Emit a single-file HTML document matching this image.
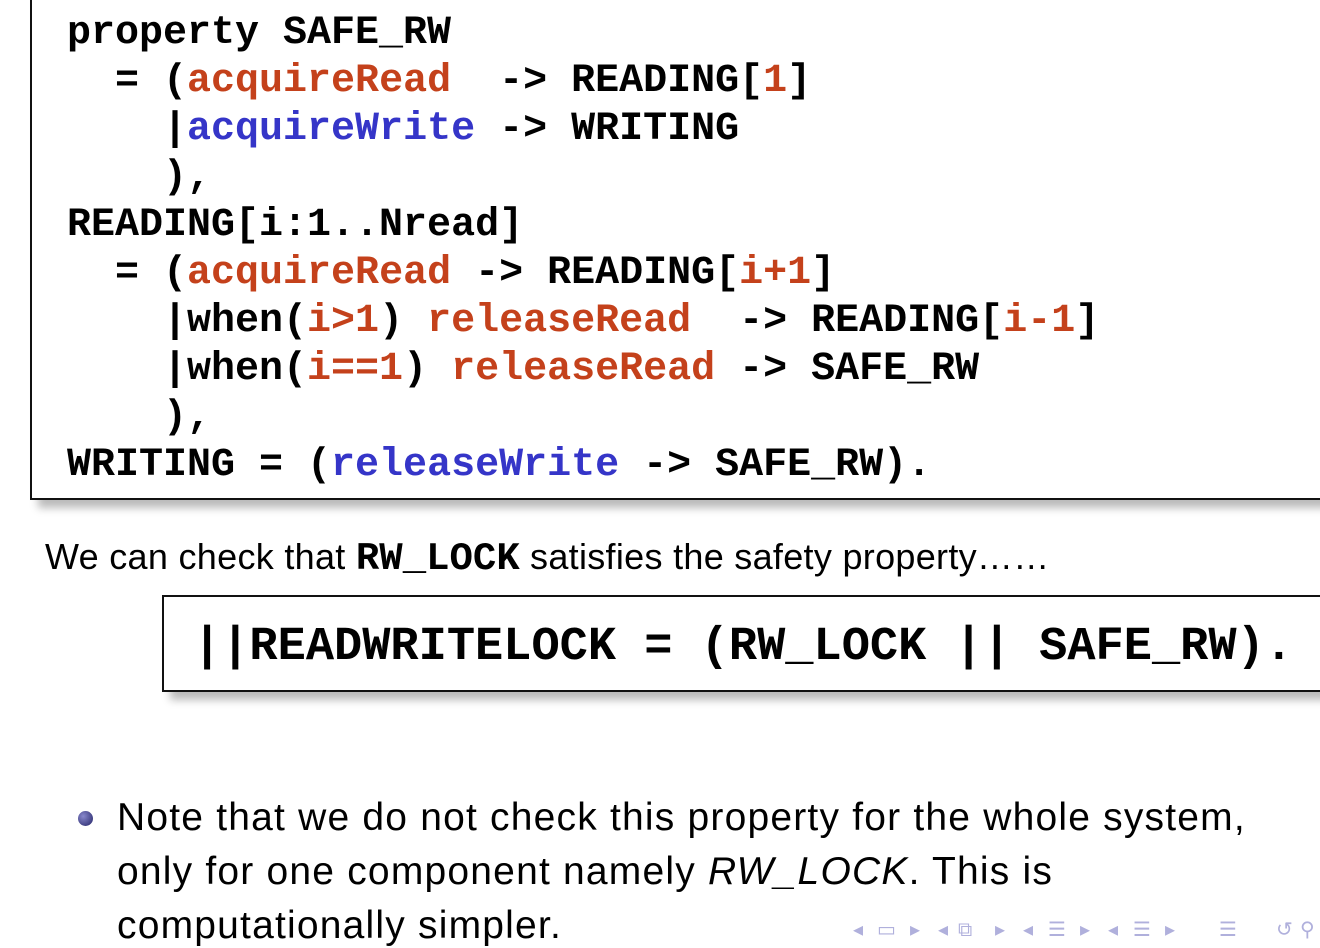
<!DOCTYPE html>
<html><head><meta charset="utf-8"><style>
html,body{margin:0;padding:0;background:#fff;width:1320px;height:948px;overflow:hidden;position:relative}
.mono{font-family:"Liberation Mono",monospace;font-weight:bold;color:#000}
.r{color:#c4411b}.b{color:#3535c8}
#box1{position:absolute;left:30px;top:-10px;width:1310px;height:506px;border:2px solid #111;box-shadow:8px 8px 8px #bbb;background:#fff}
#code{position:absolute;left:67px;top:10px;margin:0;font-size:40px;line-height:48px;white-space:pre}
#t1{position:absolute;left:45px;top:536px;font-family:"Liberation Sans",sans-serif;font-size:36px;letter-spacing:0.3px;white-space:nowrap}
#box2{position:absolute;left:162px;top:595px;width:1180px;height:93px;border:2px solid #111;box-shadow:8px 8px 8px #bbb;background:#fff}
#t2{position:absolute;left:193px;top:621px;font-size:47px;line-height:54px;white-space:pre}
#bul{position:absolute;left:78px;top:811px;width:15px;height:15px;border-radius:50%;background:radial-gradient(circle at 35% 35%,#8888cc,#222266)}
#t3{position:absolute;left:117px;top:791px;font-family:"Liberation Sans",sans-serif;font-size:39px;line-height:54px;letter-spacing:1.2px;white-space:nowrap}
.n{position:absolute;top:917px;font-family:"DejaVu Sans",sans-serif;font-size:20px;color:#b0b0dc;line-height:24px}
</style></head><body>
<div id="box1"></div>
<pre id="code" class="mono">property SAFE_RW
  = (<span class="r">acquireRead</span>  -> READING[<span class="r">1</span>]
    |<span class="b">acquireWrite</span> -> WRITING
    ),
READING[i:1..Nread]
  = (<span class="r">acquireRead</span> -> READING[<span class="r">i+1</span>]
    |when(<span class="r">i&gt;1</span>) <span class="r">releaseRead</span>  -> READING[<span class="r">i-1</span>]
    |when(<span class="r">i==1</span>) <span class="r">releaseRead</span> -> SAFE_RW
    ),
WRITING = (<span class="b">releaseWrite</span> -> SAFE_RW).</pre>
<div id="t1">We can check that <span class="mono" style="font-size:39px;letter-spacing:0">RW_LOCK</span> satisfies the safety property……</div>
<div id="box2"></div>
<div id="t2" class="mono">||READWRITELOCK = (RW_LOCK || SAFE_RW).</div>
<div id="bul"></div>
<div id="t3">Note that we do not check this property for the whole system,<br>only for one component namely <i>RW_LOCK</i>. This is<br>computationally simpler.</div>
<span class="n" style="left:853px">◂</span><span class="n" style="left:877px">▭</span><span class="n" style="left:910px">▸</span>
<span class="n" style="left:938px">◂</span><span class="n" style="left:958px">⧉</span><span class="n" style="left:995px">▸</span>
<span class="n" style="left:1023px">◂</span><span class="n" style="left:1048px">☰</span><span class="n" style="left:1080px">▸</span>
<span class="n" style="left:1108px">◂</span><span class="n" style="left:1133px">☰</span><span class="n" style="left:1165px">▸</span>
<span class="n" style="left:1219px">☰</span><span class="n" style="left:1276px">↺</span><span class="n" style="left:1300px">⚲</span>
</body></html>
